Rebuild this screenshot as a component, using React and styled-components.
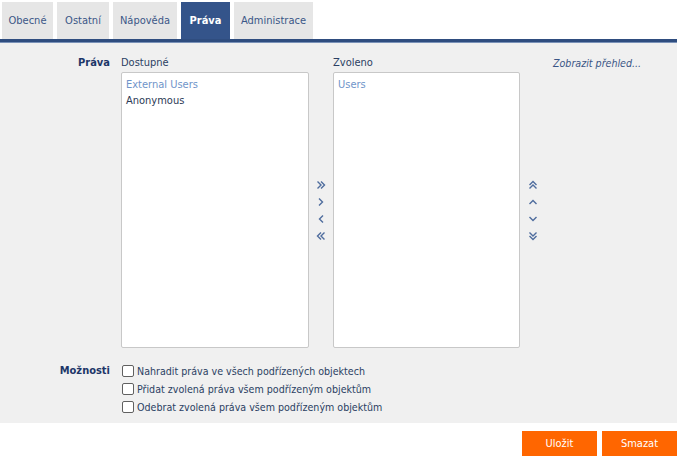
import React from "react";
import styled, { createGlobalStyle } from "styled-components";

const Global = createGlobalStyle`
  html, body { margin: 0; padding: 0; background: #fff; }
  body { font-family: Tahoma, "DejaVu Sans Condensed", "Liberation Sans", Arial, sans-serif; font-size: 10.6px; color: #2b3f63; }
  * { box-sizing: border-box; }
`;

const Page = styled.div`
  width: 680px;
  height: 458px;
  padding-top: 2px;
`;

const TabBar = styled.div`
  display: flex;
  gap: 4px;
  padding-left: 2px;
  height: 37px;
`;

const Tab = styled.div`
  display: flex;
  align-items: center;
  justify-content: center;
  width: ${(p) => p.$w}px;
  background: ${(p) => (p.$active ? "#34548a" : "#e6e6e6")};
  color: ${(p) => (p.$active ? "#ffffff" : "#3b5787")};
  font-weight: ${(p) => (p.$active ? "bold" : "normal")};
  font-size: 11px;
`;

const Rule = styled.div`
  width: 677px;
  height: 4px;
  background: #2f4d7f;
  border-bottom: 1px solid #7a92b8;
`;

const Panel = styled.div`
  width: 677px;
  height: 380px;
  background: #f0f0f0;
  padding-top: 13px;
  display: flex;
  flex-direction: column;
`;

const Row = styled.div`
  display: flex;
  align-items: flex-start;
`;

const Label = styled.div`
  width: 121px;
  padding-right: 11px;
  text-align: right;
  font-weight: bold;
  font-size: 11px;
  color: #1d3668;
  line-height: 14px;
`;

const Group = styled.div`
  display: flex;
  flex-direction: column;
  width: ${(p) => p.$w}px;
`;

const Caption = styled.div`
  line-height: 14px;
  height: 14px;
  margin-bottom: 2px;
  color: #2b3f63;
  font-size: 11px;
`;

const ListBox = styled.div`
  height: 276px;
  background: #fff;
  border: 1px solid #c8c8c8;
  border-radius: 2px;
  padding: 4px 4px;
`;

const Item = styled.div`
  line-height: 16px;
  font-size: 11px;
  color: ${(p) => (p.$hint ? "#6f94c9" : "#2b3a55")};
`;

const ArrowCol = styled.div`
  width: ${(p) => p.$w}px;
  height: 276px;
  margin-top: 16px;
  display: flex;
  flex-direction: column;
  align-items: center;
  justify-content: center;
  gap: 5px;
`;

const ArrowBtn = styled.div`
  width: 12px;
  height: 12px;
  display: flex;
  align-items: center;
  justify-content: center;
  color: #4f6d9e;
`;

const Link = styled.div`
  margin-left: 7px;
  line-height: 14px;
  font-style: italic;
  color: #3a5585;
`;

const OptionsRow = styled(Row)`
  margin-top: 16px;
`;

const Checks = styled.div`
  display: flex;
  flex-direction: column;
  gap: 4px;
`;

const CheckLine = styled.label`
  display: flex;
  align-items: center;
  gap: 3px;
  line-height: 14px;
  color: #2b3f63;
`;

const Box = styled.span`
  width: 12px;
  height: 12px;
  border: 1px solid #606060;
  border-radius: 2px;
  background: #fff;
  margin-left: 1px;
`;

const Footer = styled.div`
  display: flex;
  justify-content: flex-end;
  gap: 5px;
  width: 677px;
  padding-top: 8px;
`;

const Button = styled.div`
  width: 75px;
  height: 25px;
  background: #ff6600;
  color: #fff;
  display: flex;
  align-items: center;
  justify-content: center;
  font-size: 11px;
`;

const Chev = ({ dir, double }) => {
  const rot = { right: 0, down: 90, left: 180, up: 270 }[dir];
  return (
    <svg width="10" height="10" viewBox="0 0 10 10" style={{ transform: `rotate(${rot}deg)` }}>
      {double ? (
        <g fill="none" stroke="currentColor" strokeWidth="1.4">
          <path d="M1.5 1.5 L5 5 L1.5 8.5" />
          <path d="M5 1.5 L8.5 5 L5 8.5" />
        </g>
      ) : (
        <path d="M3 1.5 L6.5 5 L3 8.5" fill="none" stroke="currentColor" strokeWidth="1.4" />
      )}
    </svg>
  );
};

export default function App() {
  return (
    <Page>
      <Global />
      <TabBar>
        <Tab $w={51}>Obecné</Tab>
        <Tab $w={52}>Ostatní</Tab>
        <Tab $w={64}>Nápověda</Tab>
        <Tab $w={49} $active>Práva</Tab>
        <Tab $w={79}>Administrace</Tab>
      </TabBar>
      <Rule />
      <Panel>
        <Row>
          <Label>Práva</Label>
          <Group $w={188}>
            <Caption>Dostupné</Caption>
            <ListBox>
              <Item $hint>External Users</Item>
              <Item>Anonymous</Item>
            </ListBox>
          </Group>
          <ArrowCol $w={24}>
            <ArrowBtn><Chev dir="right" double /></ArrowBtn>
            <ArrowBtn><Chev dir="right" /></ArrowBtn>
            <ArrowBtn><Chev dir="left" /></ArrowBtn>
            <ArrowBtn><Chev dir="left" double /></ArrowBtn>
          </ArrowCol>
          <Group $w={187}>
            <Caption>Zvoleno</Caption>
            <ListBox>
              <Item $hint>Users</Item>
            </ListBox>
          </Group>
          <ArrowCol $w={26}>
            <ArrowBtn><Chev dir="up" double /></ArrowBtn>
            <ArrowBtn><Chev dir="up" /></ArrowBtn>
            <ArrowBtn><Chev dir="down" /></ArrowBtn>
            <ArrowBtn><Chev dir="down" double /></ArrowBtn>
          </ArrowCol>
          <Link>Zobrazit přehled...</Link>
        </Row>
        <OptionsRow>
          <Label>Možnosti</Label>
          <Checks>
            <CheckLine><Box />Nahradit práva ve všech podřízených objektech</CheckLine>
            <CheckLine><Box />Přidat zvolená práva všem podřízeným objektům</CheckLine>
            <CheckLine><Box />Odebrat zvolená práva všem podřízeným objektům</CheckLine>
          </Checks>
        </OptionsRow>
      </Panel>
      <Footer>
        <Button>Uložit</Button>
        <Button>Smazat</Button>
      </Footer>
    </Page>
  );
}
